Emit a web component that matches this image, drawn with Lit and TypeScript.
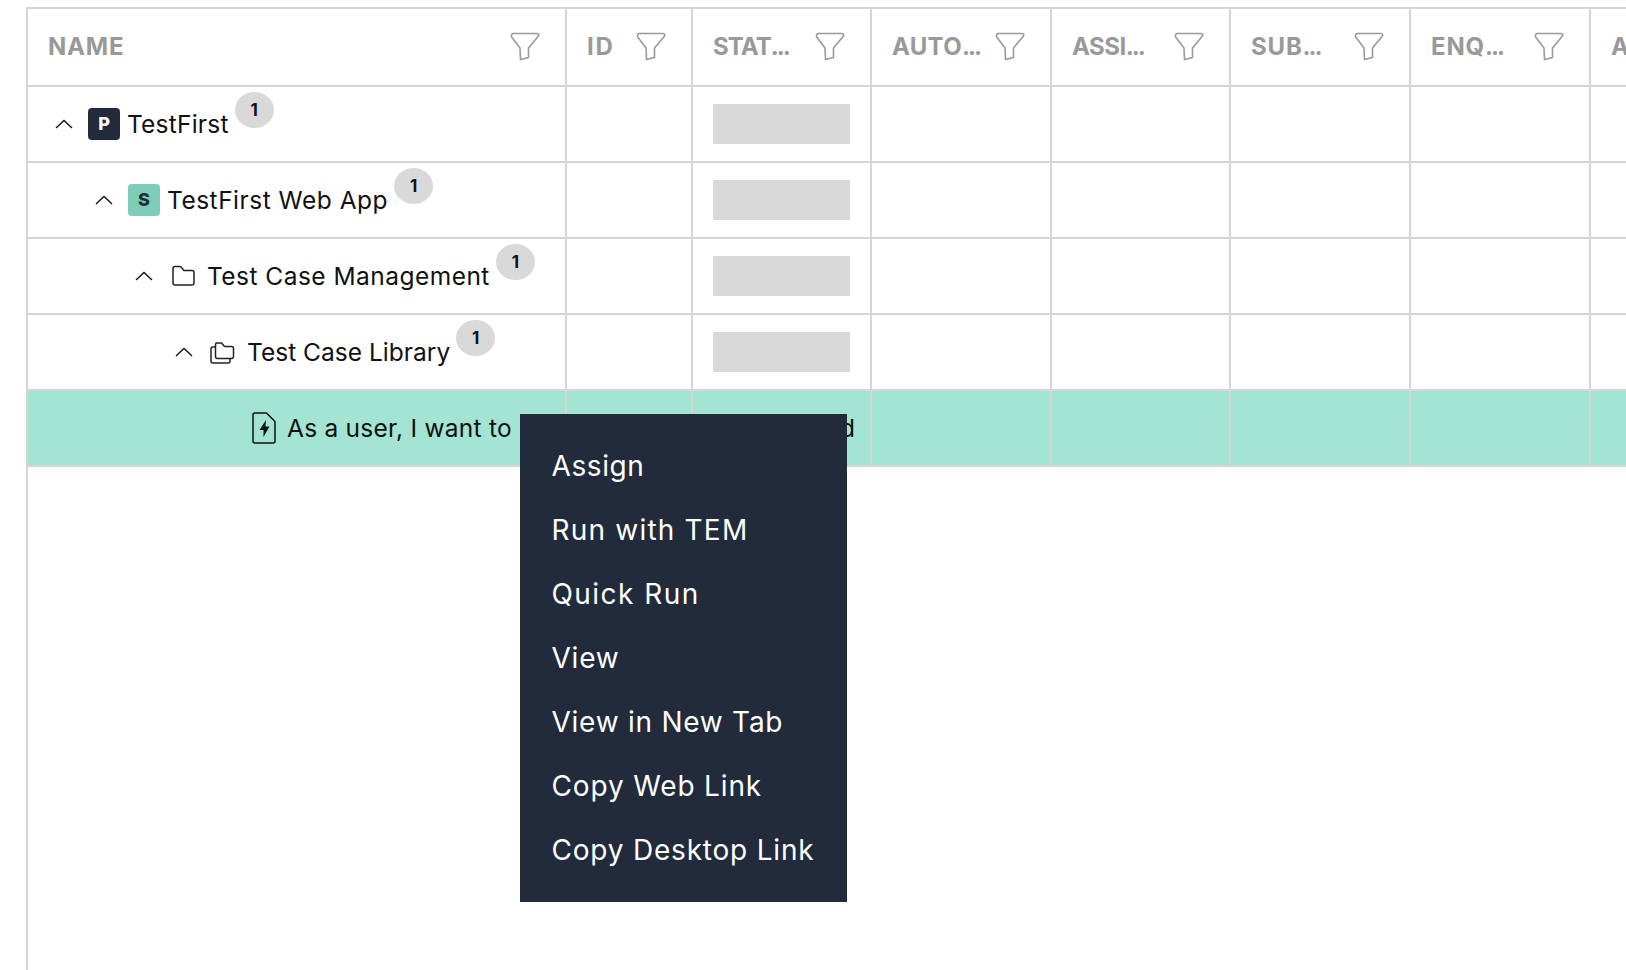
import { LitElement, html, css } from "lit";
import { customElement } from "lit/decorators.js";

const COLS = [
  { label: "NAME", dots: false, w: 539, ls: 0.8 },
  { label: "ID", dots: false, w: 126, ls: 1.8 },
  { label: "STAT", dots: true, w: 179, ls: -0.9 },
  { label: "AUTO", dots: true, w: 180, ls: 0.3 },
  { label: "ASSI", dots: true, w: 179, ls: -0.5 },
  { label: "SUB", dots: true, w: 180, ls: 0.8 },
  { label: "ENQ", dots: true, w: 180, ls: 0.8 },
  { label: "A", dots: false, w: 179, ls: 0.8 },
];

const TREE = [
  { level: 0, label: "TestFirst", kind: "p", ls: 0.22 },
  { level: 1, label: "TestFirst Web App", kind: "s", ls: 0.5 },
  { level: 2, label: "Test Case Management", kind: "folder", ls: 0.47 },
  { level: 3, label: "Test Case Library", kind: "folders", ls: 0.02 },
];

const MENU = [
  { label: "Assign", ls: 0.6 },
  { label: "Run with TEM", ls: 1.2 },
  { label: "Quick Run", ls: 1.45 },
  { label: "View", ls: 0.8 },
  { label: "View in New Tab", ls: 0.75 },
  { label: "Copy Web Link", ls: 0.85 },
  { label: "Copy Desktop Link", ls: 0.8 },
];

const filterIcon = html`<svg class="filter" viewBox="0 0 30 29" fill="none" stroke="#999" stroke-width="1.6" stroke-linejoin="round"><path d="M3.5 1.5H26.5Q29.5 1.5 28.5 4L18.5 16V25.5L10.5 27.5 10 16 1.7 5Q0.8 1.5 3.5 1.5Z"/></svg>`;
const chevron = html`<svg class="chev" viewBox="0 0 18 10" fill="none" stroke="#111" stroke-width="1.4"><path d="M1 9L9 1.5 17 9"/></svg>`;

const glyph = (kind: string) => {
  if (kind === "p" || kind === "s") return html`<span class="tile ${kind}">${kind.toUpperCase()}</span>`;
  if (kind === "folder")
    return html`<svg class="ico" viewBox="0 0 24 24" fill="none" stroke="#222" stroke-width="1.5" stroke-linejoin="round"><path d="M1 4.5Q1 2.5 3 2.5H7.5Q8.5 2.5 9 3L12 6.5H20Q22 6.5 22 8.5V19Q22 21 20 21H3Q1 21 1 19Z"/></svg>`;
  return html`<svg class="ico2" viewBox="0 0 28 24" fill="none" stroke="#222" stroke-width="1.5" stroke-linejoin="round"><path d="M5.5 6V4.5Q5.5 3 7 3H11.5L14.5 6.5H21.5Q23.5 6.5 23.5 8.5V16.5Q23.5 18.5 21.5 18.5H7.5Q5.5 18.5 5.5 16.5Z"/><path d="M5.5 7H3Q1 7 1 9V21Q1 23 3 23H18Q20 23 20 21V18.5"/></svg>`;
};

@customElement("app-root")
export class AppRoot extends LitElement {
  static styles = css`
    :host { display: block; width: 1626px; height: 970px; overflow: hidden; position: relative; background: #fff; font-family: "Inter", "Liberation Sans", sans-serif; color: #111; }
    .table { margin: 7px 0 0 26px; width: 1640px; height: 963px; border-left: 2px solid #d6d6d6; border-top: 2px solid #d6d6d6; box-sizing: border-box; }
    .row { display: flex; height: 76px; box-sizing: border-box; border-bottom: 2px solid #d6d6d6; }
    .head { height: 77.5px; }
    .cell { flex: none; box-sizing: border-box; border-right: 2px solid #d6d6d6; padding: 0 20px; display: flex; align-items: center; min-width: 0; }
    .hcell { justify-content: space-between; font-weight: 700; font-size: 24px; color: #999; padding-right: 25px; white-space: nowrap; }
    .dots { letter-spacing: -2px; }
    .filter { width: 30px; height: 29px; flex: none; }
    .status { width: 137px; height: 40px; background: #d9d9d9; }
    .tree { font-size: 24.5px; white-space: nowrap; }
    .chev { width: 18px; height: 10px; flex: none; margin-left: 7px; margin-right: 15px; }
    .tile { width: 32px; height: 32px; border-radius: 4px; display: flex; align-items: center; justify-content: center; font-size: 18px; font-weight: 800; flex: none; }
    .tile.p { background: #212b3c; color: #fff; }
    .tile.s { background: #7dccb5; color: #212b3c; }
    .ico { width: 24px; height: 24px; flex: none; margin: 0 4px; }
    .ico2 { width: 28px; height: 24px; flex: none; margin: 0 2px; }
    .lbl { margin-left: 7px; }
    .badge { width: 39px; height: 36px; border-radius: 50%; background: #d9d9d9; font-size: 17px; font-weight: 700; display: flex; align-items: center; justify-content: center; margin: -28px 0 0 6px; flex: none; }
    .sel { background: #a3e4d2; height: 76px; position: relative; }
    .sel-text { position: absolute; left: 223px; top: 0; height: 74px; display: flex; align-items: center; gap: 10px; font-size: 24.5px; white-space: pre; }
    .sel-text svg { width: 26px; height: 34px; flex: none; }
    .vis { letter-spacing: 0.25px; }
    .hid { letter-spacing: 0.52px; }
    .menu { position: absolute; left: 520px; top: 414px; width: 327px; height: 488px; background: #212b3c; color: #fff; box-sizing: border-box; padding: 20px 0 20px 31.5px; font-size: 28px; }
    .item { height: 64px; display: flex; align-items: center; white-space: nowrap; }
  `;

  render() {
    return html`
      <div class="table">
        <div class="row head">
          ${COLS.map(c => html`<div class="cell hcell" style="width:${c.w}px"><span style="letter-spacing:${c.ls}px">${c.label}${c.dots ? html`<span class="dots">...</span>` : ""}</span>${c.label === "A" ? "" : filterIcon}</div>`)}
        </div>
        ${TREE.map(r => html`
          <div class="row">
            ${COLS.map((c, i) => html`<div class="cell ${i === 0 ? "tree" : ""}" style="width:${c.w}px;${i === 0 ? `padding-left:${20 + r.level * 40}px` : ""}">
              ${i === 0 ? html`${chevron}${glyph(r.kind)}<span class="lbl" style="letter-spacing:${r.ls}px">${r.label}</span><span class="badge">1</span>` : i === 2 ? html`<div class="status"></div>` : ""}
            </div>`)}
          </div>`)}
        <div class="row sel">
          ${COLS.map(c => html`<div class="cell" style="width:${c.w}px"></div>`)}
          <div class="sel-text">
            <svg viewBox="0 0 26 34" fill="none" stroke="#111" stroke-width="1.5" stroke-linejoin="round"><path d="M4 2H15.5L24 10.5V30Q24 32 22 32H4Q2 32 2 30V4Q2 2 4 2Z"/><path d="M15 9L8.5 19H12.5V26L18.5 15.5H14.5Z" fill="#111" stroke="none"/></svg>
            <span><span class="vis">As a user, I want to </span><span class="hid">see all my test cases sorted</span></span>
          </div>
        </div>
      </div>
      <div class="menu">${MENU.map(m => html`<div class="item" style="letter-spacing:${m.ls}px">${m.label}</div>`)}</div>
    `;
  }
}
